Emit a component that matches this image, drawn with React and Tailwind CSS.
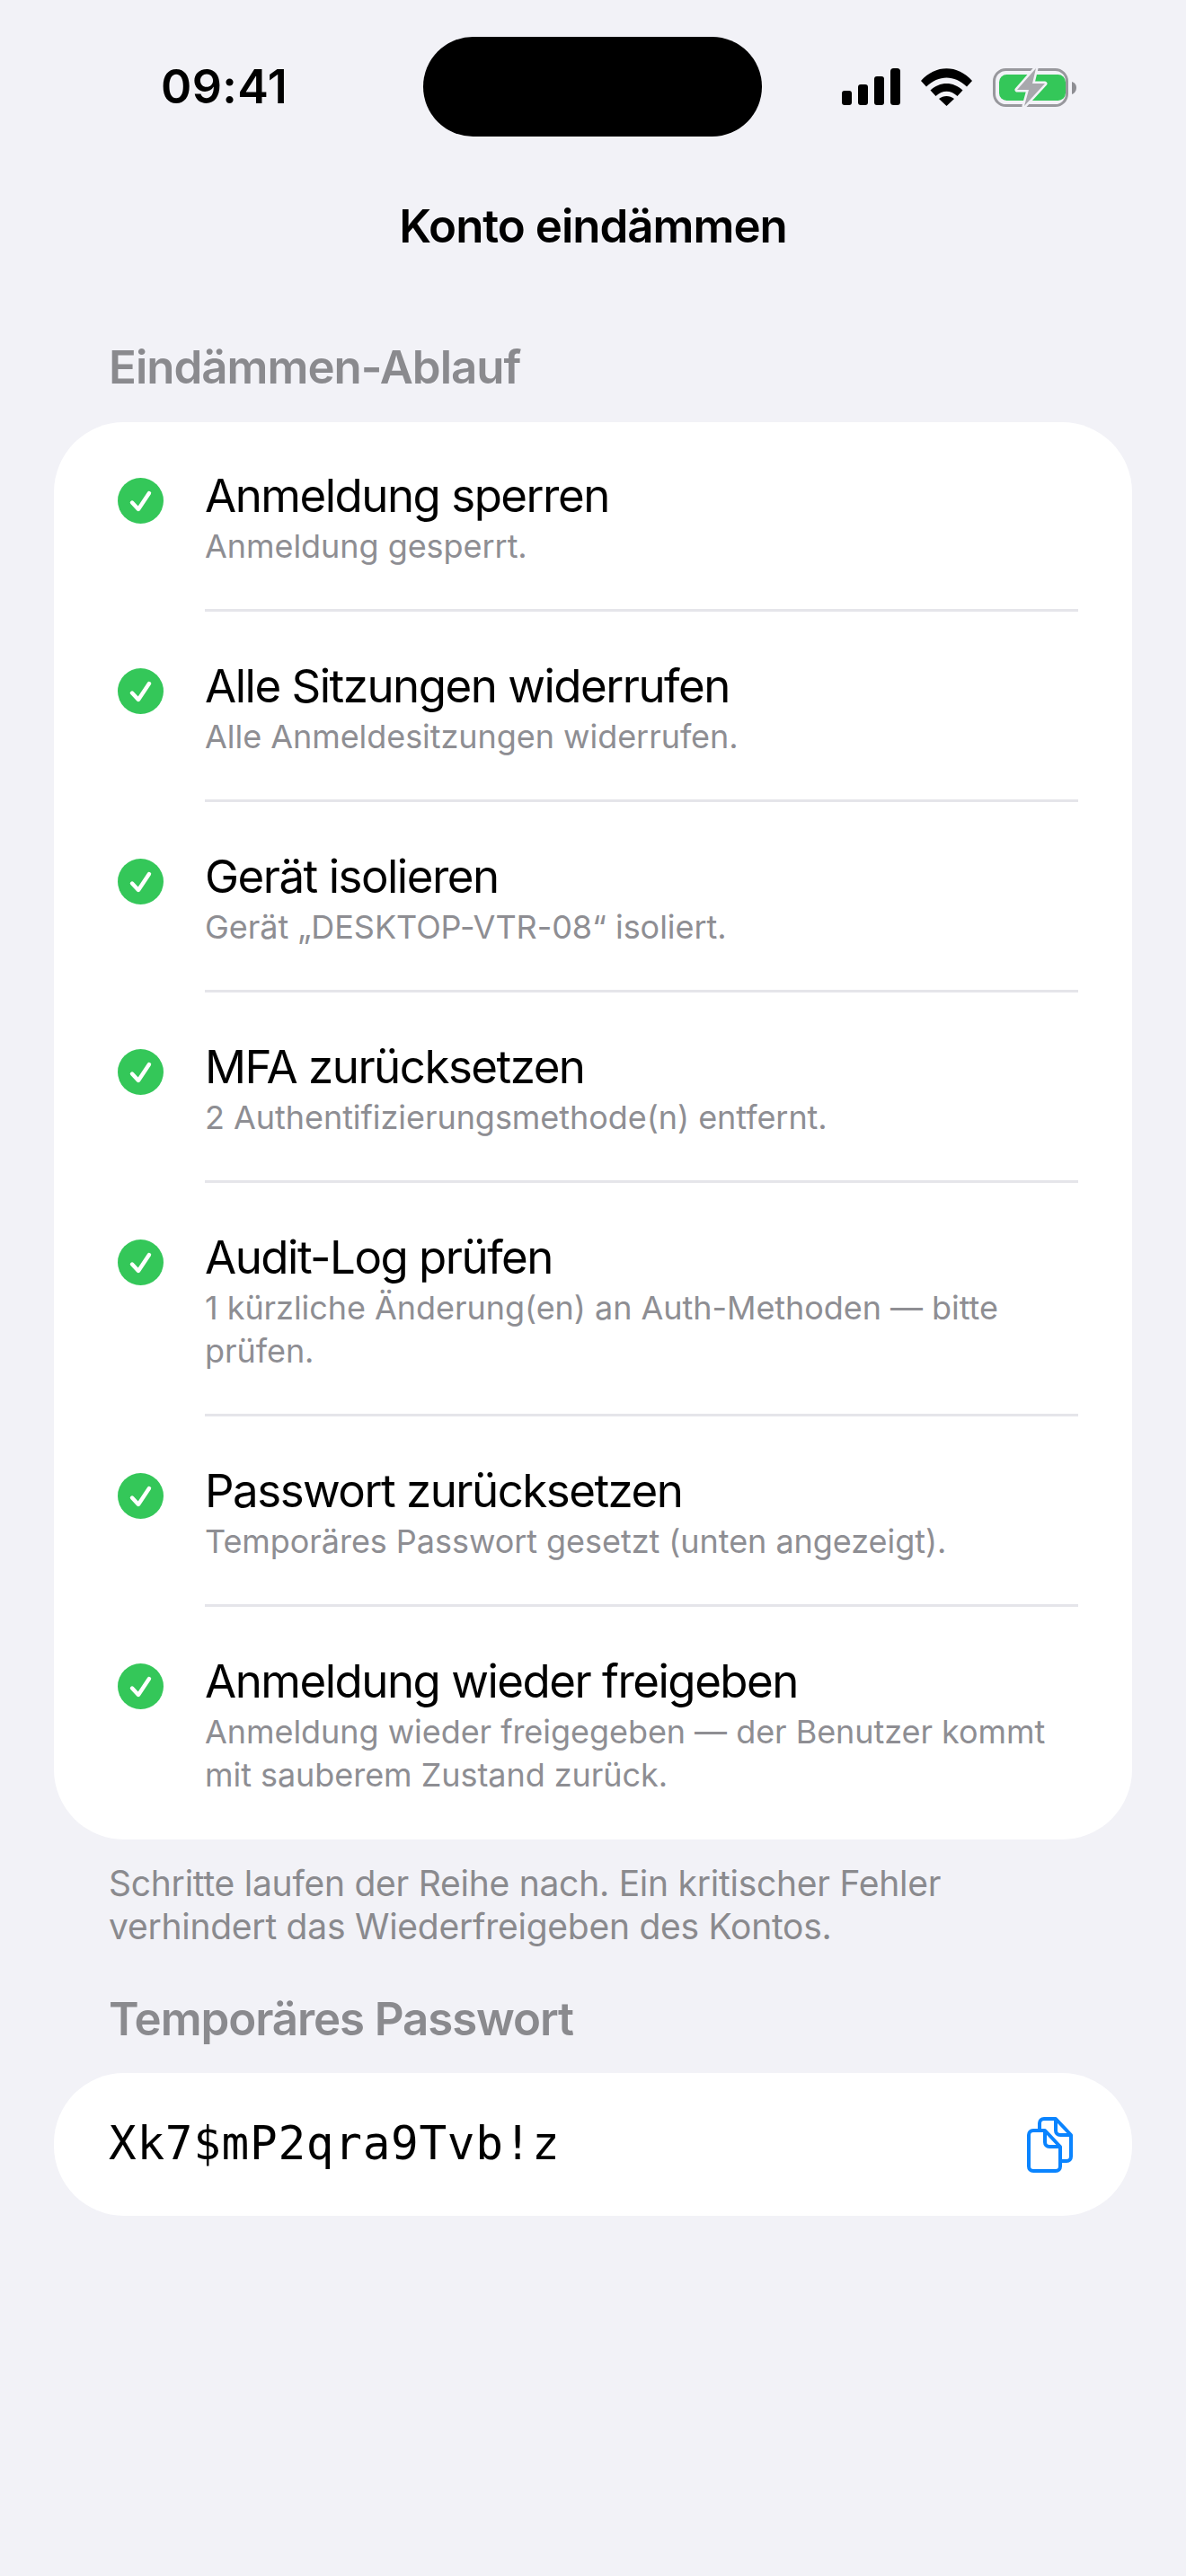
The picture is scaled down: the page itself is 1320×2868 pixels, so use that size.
const steps = [
  ["Anmeldung sperren", "Anmeldung gesperrt."],
  ["Alle Sitzungen widerrufen", "Alle Anmeldesitzungen widerrufen."],
  ["Gerät isolieren", "Gerät „DESKTOP-VTR-08“ isoliert."],
  ["MFA zurücksetzen", "2 Authentifizierungsmethode(n) entfernt."],
  ["Audit-Log prüfen", "1 kürzliche Änderung(en) an Auth-Methoden — bitte prüfen."],
  ["Passwort zurücksetzen", "Temporäres Passwort gesetzt (unten angezeigt)."],
  ["Anmeldung wieder freigeben", "Anmeldung wieder freigegeben — der Benutzer kommt mit sauberem Zustand zurück."],
];

function Check() {
  return (
    <svg width="51" height="51" viewBox="0 0 51 51" className="shrink-0 mt-[11px]">
      <circle cx="25.5" cy="25.5" r="25.5" fill="#34c759" />
      <path d="M16 27.5 L23 35 L35 17" fill="none" stroke="#fff" strokeWidth="4.4" strokeLinecap="round" strokeLinejoin="round" />
    </svg>
  );
}

function Signal() {
  return (
    <svg width="65" height="41" viewBox="0 0 65 41">
      <rect x="0" y="25" width="11" height="16" rx="3" fill="#000" />
      <rect x="18" y="18" width="11" height="23" rx="3" fill="#000" />
      <rect x="36" y="9" width="11" height="32" rx="3" fill="#000" />
      <rect x="54" y="0" width="11" height="41" rx="3.5" fill="#000" />
    </svg>
  );
}

function Wifi() {
  return (
    <svg width="57" height="42" viewBox="0 0 57 42">
      <path d="M0 14 C16 -4.5 41 -4.5 57 14 L51 20.5 C37.5 7 19.5 7 6 20.5 Z" fill="#000" />
      <path d="M10.5 24.5 C21 14.5 36 14.5 46.5 24.5 L40.5 31 C33 24 24 24 16.5 31 Z" fill="#000" />
      <path d="M20 34 C25 30 32 30 37 34 L28.5 42 Z" fill="#000" />
    </svg>
  );
}

function Battery() {
  return (
    <svg width="93" height="46" viewBox="0 0 93 46">
      <rect x="1.5" y="3.5" width="81" height="40" rx="13" fill="none" stroke="#98989d" strokeWidth="3" />
      <rect x="7" y="9" width="74" height="29" rx="8.5" fill="#34c759" />
      <path d="M88 17 C91 18 93 20 93 24 C93 27 91 30 88 31 Z" fill="#8e8e93" />
      <path d="M48 2 L27 26 H40 L35 44 L58 19 H44 Z" fill="#a8a8ad" stroke="#f2f2f7" strokeWidth="5" strokeLinejoin="round" paintOrder="stroke" />
    </svg>
  );
}

function Copy() {
  return (
    <svg width="51" height="62" viewBox="0 0 51 62" fill="none" stroke="#0a84ff" strokeWidth="4" strokeLinejoin="round">
      <path d="M14 13 V7 C14 4 16 2 19 2 H32 L49 20 V44 C49 47 47 49 44 49 H37" />
      <path d="M32 2 V15 C32 18 34 20 37 20 H49" />
      <path d="M7 15 H20 L37 33 V55 C37 58 35 60 32 60 H7 C4 60 2 58 2 55 V20 C2 17 4 15 7 15 Z" />
      <path d="M20 15 V28 C20 31 22 33 25 33 H37" />
    </svg>
  );
}

export default function App() {
  return (
    <div className="h-[2868px] overflow-hidden bg-[#f2f2f7] pt-[41px] font-['Inter','Liberation_Sans',sans-serif] text-black">
      <div className="flex h-[111px] items-center">
        <div className="w-[471px] pl-[179px] text-[52px] leading-[62px] font-semibold tracking-[0.4px]">09:41</div>
        <div className="w-[377px] h-[111px] rounded-[56px] bg-black" />
        <div className="flex items-center pl-[89px]">
          <Signal />
          <div className="ml-[23px]"><Wifi /></div>
          <div className="ml-[23px]"><Battery /></div>
        </div>
      </div>

      <div className="mt-[69px] text-center text-[51px] leading-[62px] font-semibold tracking-[-1px]">Konto eindämmen</div>

      <div className="mx-[121px] mt-[97px] text-[51px] leading-[58px] font-semibold tracking-[-1px] text-[#8a8a8e]">Eindämmen-Ablauf</div>

      <div className="mx-[60px] mt-[32px] rounded-[78px] bg-white pt-[51px] pb-[48px] pl-[71px] pr-[60px]">
        {steps.map(([title, sub], i) => (
          <div key={title} className="flex gap-[46px]">
            <Check />
            <div className="flex-1 min-w-0">
              <div className="text-[51px] leading-[61px] tracking-[-1.5px]">{title}</div>
              <div className="mt-[2px] text-[36px] leading-[48px] tracking-[-0.05px] text-[#8e8e93]">{sub}</div>
              {i < steps.length - 1 && <div className="mt-[46px] mb-[52px] h-[3px] bg-[#e5e5ea]" />}
            </div>
          </div>
        ))}
      </div>

      <div className="mx-[121px] mt-[25px] text-[39px] leading-[48px] tracking-[-0.25px] text-[#8a8a8e]">
        Schritte laufen der Reihe nach. Ein kritischer Fehler verhindert das Wiederfreigeben des Kontos.
      </div>

      <div className="mx-[121px] mt-[50px] text-[51px] leading-[58px] font-semibold tracking-[-1.1px] text-[#8a8a8e]">Temporäres Passwort</div>

      <div className="mx-[60px] mt-[31px] h-[159px] rounded-[78px] bg-white flex items-center justify-between pl-[61px] pr-[66px]">
        <span className="font-['DejaVu_Sans_Mono',monospace] text-[51px] tracking-[0.7px]">Xk7$mP2qra9Tvb!z</span>
        <Copy />
      </div>
    </div>
  );
}
